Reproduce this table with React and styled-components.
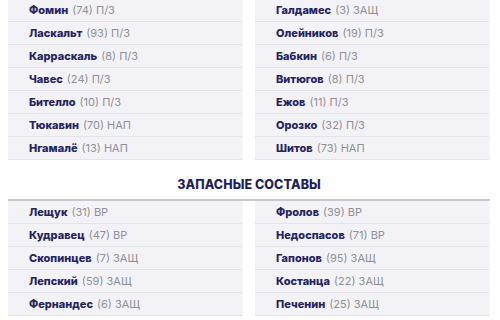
import styled, { createGlobalStyle } from 'styled-components';

const GlobalStyle = createGlobalStyle`
  html, body {
    margin: 0;
    padding: 0;
    background: #ffffff;
    overflow: hidden;
  }
  body {
    font-family: Inter, "Noto Sans", "Liberation Sans", sans-serif;
  }
`;

const starters = [
  [
    ['Фомин', 74, 'П/З'],
    ['Ласкальт', 93, 'П/З'],
    ['Карраскаль', 8, 'П/З'],
    ['Чавес', 24, 'П/З'],
    ['Бителло', 10, 'П/З'],
    ['Тюкавин', 70, 'НАП'],
    ['Нгамалё', 13, 'НАП'],
  ],
  [
    ['Галдамес', 3, 'ЗАЩ'],
    ['Олейников', 19, 'П/З'],
    ['Бабкин', 6, 'П/З'],
    ['Витюгов', 8, 'П/З'],
    ['Ежов', 11, 'П/З'],
    ['Орозко', 32, 'П/З'],
    ['Шитов', 73, 'НАП'],
  ],
];

const subs = [
  [
    ['Лещук', 31, 'ВР'],
    ['Кудравец', 47, 'ВР'],
    ['Скопинцев', 7, 'ЗАЩ'],
    ['Лепский', 59, 'ЗАЩ'],
    ['Фернандес', 6, 'ЗАЩ'],
  ],
  [
    ['Фролов', 39, 'ВР'],
    ['Недоспасов', 71, 'ВР'],
    ['Гапонов', 95, 'ЗАЩ'],
    ['Костанца', 22, 'ЗАЩ'],
    ['Печенин', 25, 'ЗАЩ'],
  ],
];

function Lineup({ columns, bordered }) {
  return (
    <Columns $bordered={bordered}>
      {columns.map((col, i) => (
        <Column key={i}>
          {col.map(([name, num, pos]) => (
            <PlayerRow key={name}>
              <Name>{name}</Name>
              <Meta>({num}) {pos}</Meta>
            </PlayerRow>
          ))}
        </Column>
      ))}
    </Columns>
  );
}

export default function App() {
  return (
    <>
      <GlobalStyle />
      <Page>
        <Scrolled>
          <Lineup columns={starters} />
          <SectionTitle>ЗАПАСНЫЕ СОСТАВЫ</SectionTitle>
          <Lineup columns={subs} bordered />
        </Scrolled>
      </Page>
    </>
  );
}

const Page = styled.div`
  width: 500px;
  height: 320px;
  overflow: hidden;
  padding: 0 10px 0 8px;
  box-sizing: border-box;
`;

const Scrolled = styled.div`
  margin-top: -1px;
`;

const Columns = styled.div`
  display: grid;
  grid-template-columns: 234px 234px;
  column-gap: 13px;
  border-top: ${p => (p.$bordered ? '2px solid #c9c9cf' : 'none')};
`;

const Column = styled.div`
  display: flex;
  flex-direction: column;
  box-shadow: 1px 0 1px rgba(0, 0, 0, 0.03);
`;

const PlayerRow = styled.div`
  height: 22px;
  display: flex;
  align-items: center;
  gap: 4px;
  padding-left: 21px;
  background: #f3f3f7;
  border-bottom: 1px solid #e3e3e9;
  font-size: 11px;
  white-space: nowrap;
`;

const Name = styled.span`
  font-weight: 800;
  color: #25255e;
`;

const Meta = styled.span`
  font-weight: 400;
  color: #8e8e94;
`;

const SectionTitle = styled.div`
  padding: 17px 0 6px;
  line-height: 16px;
  text-align: center;
  font-size: 12.5px;
  font-weight: 800;
  color: #1f1f5a;
  letter-spacing: 0.1px;
`;
